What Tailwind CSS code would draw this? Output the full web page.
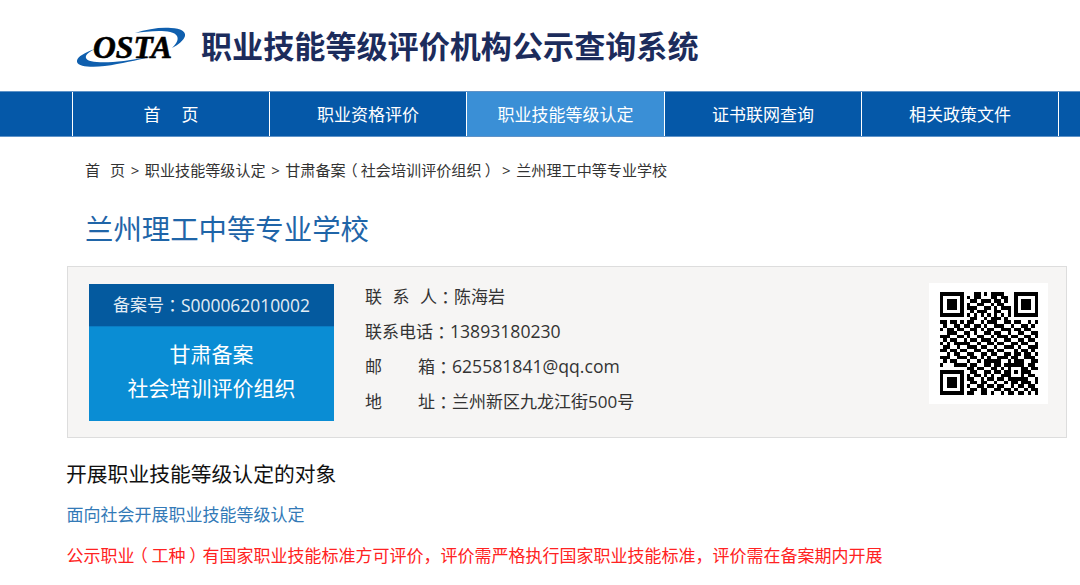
<!DOCTYPE html>
<html lang="zh-CN">
<head>
<meta charset="UTF-8">
<meta name="viewport" content="width=device-width, initial-scale=1.0">
<title>职业技能等级评价机构公示查询系统</title>
<script src="https://cdn.jsdelivr.net/npm/@tailwindcss/browser@4"></script>
</head>
<body class="bg-white h-[585px] overflow-hidden font-['Open_Sans','Noto_Sans_CJK_SC',sans-serif]">
  <!-- 顶部 logo -->
  <header class="h-[91px] flex items-center pl-[77px]">
    <svg class="w-[110px] h-[44px] mt-[3px]" viewBox="0 0 110 44">
      <path fill="#0f5fae" d="M18 24C6 28-1 33 0 37 2 43 22 43 40 39 56 36 70 33 80 30 66 33 50 36 36 37 22 38 10 37 9 33 8 30 12 27 18 24z"/>
      <path fill="#0f5fae" d="M58 8C70 4 84 2 94 3 104 3 109 7 108 11 107 15 101 20 95 23 99 19 102 15 100 11 98 7 90 6 82 6 74 6 65 7 58 8z"/>
      <text x="16" y="33" font-family="Liberation Serif" font-weight="700" font-style="italic" font-size="31" textLength="79" lengthAdjust="spacingAndGlyphs" fill="#000" stroke="#000" stroke-width="0.6">OSTA</text>
    </svg>
    <h1 class="ml-[14px] mt-[2px] text-[31.1px] font-bold text-[#1c2c5c] leading-none">职业技能等级评价机构公示查询系统</h1>
  </header>

  <!-- 导航 -->
  <nav class="h-[46px] bg-[#0558a8] border-y border-[#5f93c8] pl-[72px] flex text-white text-[17px]">
    <a href="#" class="w-[197px] border-l border-white flex items-center justify-center pt-px gap-[21px]"><span>首</span><span>页</span></a>
    <a href="#" class="w-[197px] border-l border-white flex items-center justify-center pt-px">职业资格评价</a>
    <a href="#" class="w-[198px] border-l border-white flex items-center justify-center pt-px bg-[#3a8fd6]">职业技能等级认定</a>
    <a href="#" class="w-[197px] border-l border-white flex items-center justify-center pt-px">证书联网查询</a>
    <a href="#" class="w-[198px] border-x border-white flex items-center justify-center pt-px">相关政策文件</a>
  </nav>

  <main class="pl-[67px] pr-[13px]">
    <!-- 面包屑 -->
    <div class="pl-[18px] pt-[22px] h-[46px] flex items-center gap-[5.5px] text-[15.1px] text-[#333] leading-none">
      <span class="flex gap-[10px]"><span>首</span><span>页</span></span><span>&gt;</span><span>职业技能等级认定</span><span>&gt;</span><span>甘肃备案<span class="inline-block w-[1em] text-center [font-feature-settings:'palt']">（</span>社会培训评价组织<span class="inline-block w-[1em] text-center [font-feature-settings:'palt']">）</span></span><span>&gt;</span><span>兰州理工中等专业学校</span>
    </div>
    <h2 class="pl-[18px] mt-[26px] text-[28.4px] leading-[40px] text-[#1f65a8]">兰州理工中等专业学校</h2>

    <!-- 机构信息 -->
    <section class="mt-[17px] h-[172px] bg-[#f6f5f4] border border-[#ddd] pl-[21px] pr-[18px] pt-[17px] flex">
      <div class="w-[245px] h-[137px] shrink-0 flex flex-col text-white text-center">
        <div class="h-[42px] bg-[#045a9f] text-[#e3edf5] text-[17px] flex items-center justify-center">备案号<span class="font-['Noto_Sans_CJK_TC']">：</span><span class="text-[17.4px]">S000062010002</span></div>
        <div class="flex-1 bg-[#0a8dd4] border-t border-[#0a7cc4] text-[21px] leading-[34px] pt-[10px]">
          <p>甘肃备案</p>
          <p>社会培训评价组织</p>
        </div>
      </div>
      <dl class="ml-[31px] flex-1 text-[17px] text-[#333] leading-[35px] -mt-[5px]">
        <div class="flex"><dt class="w-[72px] flex justify-between"><span>联</span><span>系</span><span>人</span></dt><dd class="font-['Noto_Sans_CJK_TC']">：</dd><dd>陈海岩</dd></div>
        <div class="flex"><dt class="w-[68px]">联系电话</dt><dd class="font-['Noto_Sans_CJK_TC']">：</dd><dd class="text-[17.6px]">13893180230</dd></div>
        <div class="flex"><dt class="w-[70px] flex justify-between"><span>邮</span><span>箱</span></dt><dd class="font-['Noto_Sans_CJK_TC']">：</dd><dd class="text-[17.6px]">625581841@qq.com</dd></div>
        <div class="flex"><dt class="w-[70px] flex justify-between"><span>地</span><span>址</span></dt><dd class="font-['Noto_Sans_CJK_TC']">：</dd><dd>兰州新区九龙江街500号</dd></div>
      </dl>
      <div class="w-[119px] h-[121px] -mt-px bg-white shrink-0 flex items-center justify-center">
        <svg id="qr" class="w-[98px] h-[103px]" viewBox="0 0 29 29" preserveAspectRatio="none" shape-rendering="crispEdges"></svg>
      </div>
    </section>

    <h3 class="mt-[21px] -ml-px text-[20.8px] leading-[30px] text-[#111]">开展职业技能等级认定的对象</h3>
    <p class="mt-[11px] -ml-[0.5px] text-[17px] leading-[30px] text-[#337ab7]">面向社会开展职业技能等级认定</p>
    <p class="mt-[10px] -ml-[0.5px] text-[17px] leading-[30px] text-[#f22]">公示职业<span class="inline-block w-[1em] text-center [font-feature-settings:'palt']">（</span>工种<span class="inline-block w-[1em] text-center [font-feature-settings:'palt']">）</span>有国家职业技能标准方可评价<span class="font-['Noto_Sans_CJK_TC']">，</span>评价需严格执行国家职业技能标准<span class="font-['Noto_Sans_CJK_TC']">，</span>评价需在备案期内开展</p>
  </main>

  <script>
    // 二维码点阵 29x29
    var rows = [
      "11111110"+"0011010111100"+"01111111",
      "10000010"+"1011000110110"+"01000001",
      "10111010"+"0110111011010"+"01011101",
      "10111010"+"1001100101100"+"01011101",
      "10111010"+"1110011010111"+"01011101",
      "10000010"+"0101110011001"+"01000001",
      "11111110"+"1010101010101"+"01111111",
      "00000000"+"0110010111010"+"00000000",
      "110110"+"1"+"0110010111001101100101",
      "010011"+"0"+"1101101001110010011010",
      "101101"+"1"+"0011010110011101101100",
      "001110"+"0"+"1101001101100100110011",
      "111001"+"1"+"0100110010111011001101",
      "010110"+"0"+"1011011101001100110110",
      "101011"+"1"+"1100100110110011011001",
      "011001"+"0"+"0111011001001110100111",
      "110110"+"1"+"1001100110110001011010",
      "001011"+"0"+"0110011011001101101101",
      "111001"+"1"+"1011010100111011001110",
      "010110"+"0"+"0100101111100101110011",
      "100011"+"1"+"1011001101101"+"11111"+"0110",
      "00000000"+"110110011010"+"10001"+"1011",
      "11111110"+"011001101101"+"10101"+"1100",
      "10000010"+"101101010011"+"10001"+"0110",
      "10111010"+"110010110110"+"11111"+"1001",
      "10111010"+"01101100100101101"+"1101",
      "10111010"+"10011011011001011"+"0110",
      "10000010"+"01101100110110100"+"1011",
      "11111110"+"11001101001011011"+"0101"
    ];
    var d = "";
    rows.forEach(function (row, y) {
      row.split("").forEach(function (c, x) {
        if (c === "1") d += "M" + x + " " + y + "h1v1h-1z";
      });
    });
    var p = document.createElementNS("http://www.w3.org/2000/svg", "path");
    p.setAttribute("d", d);
    document.getElementById("qr").appendChild(p);
  </script>
</body>
</html>
